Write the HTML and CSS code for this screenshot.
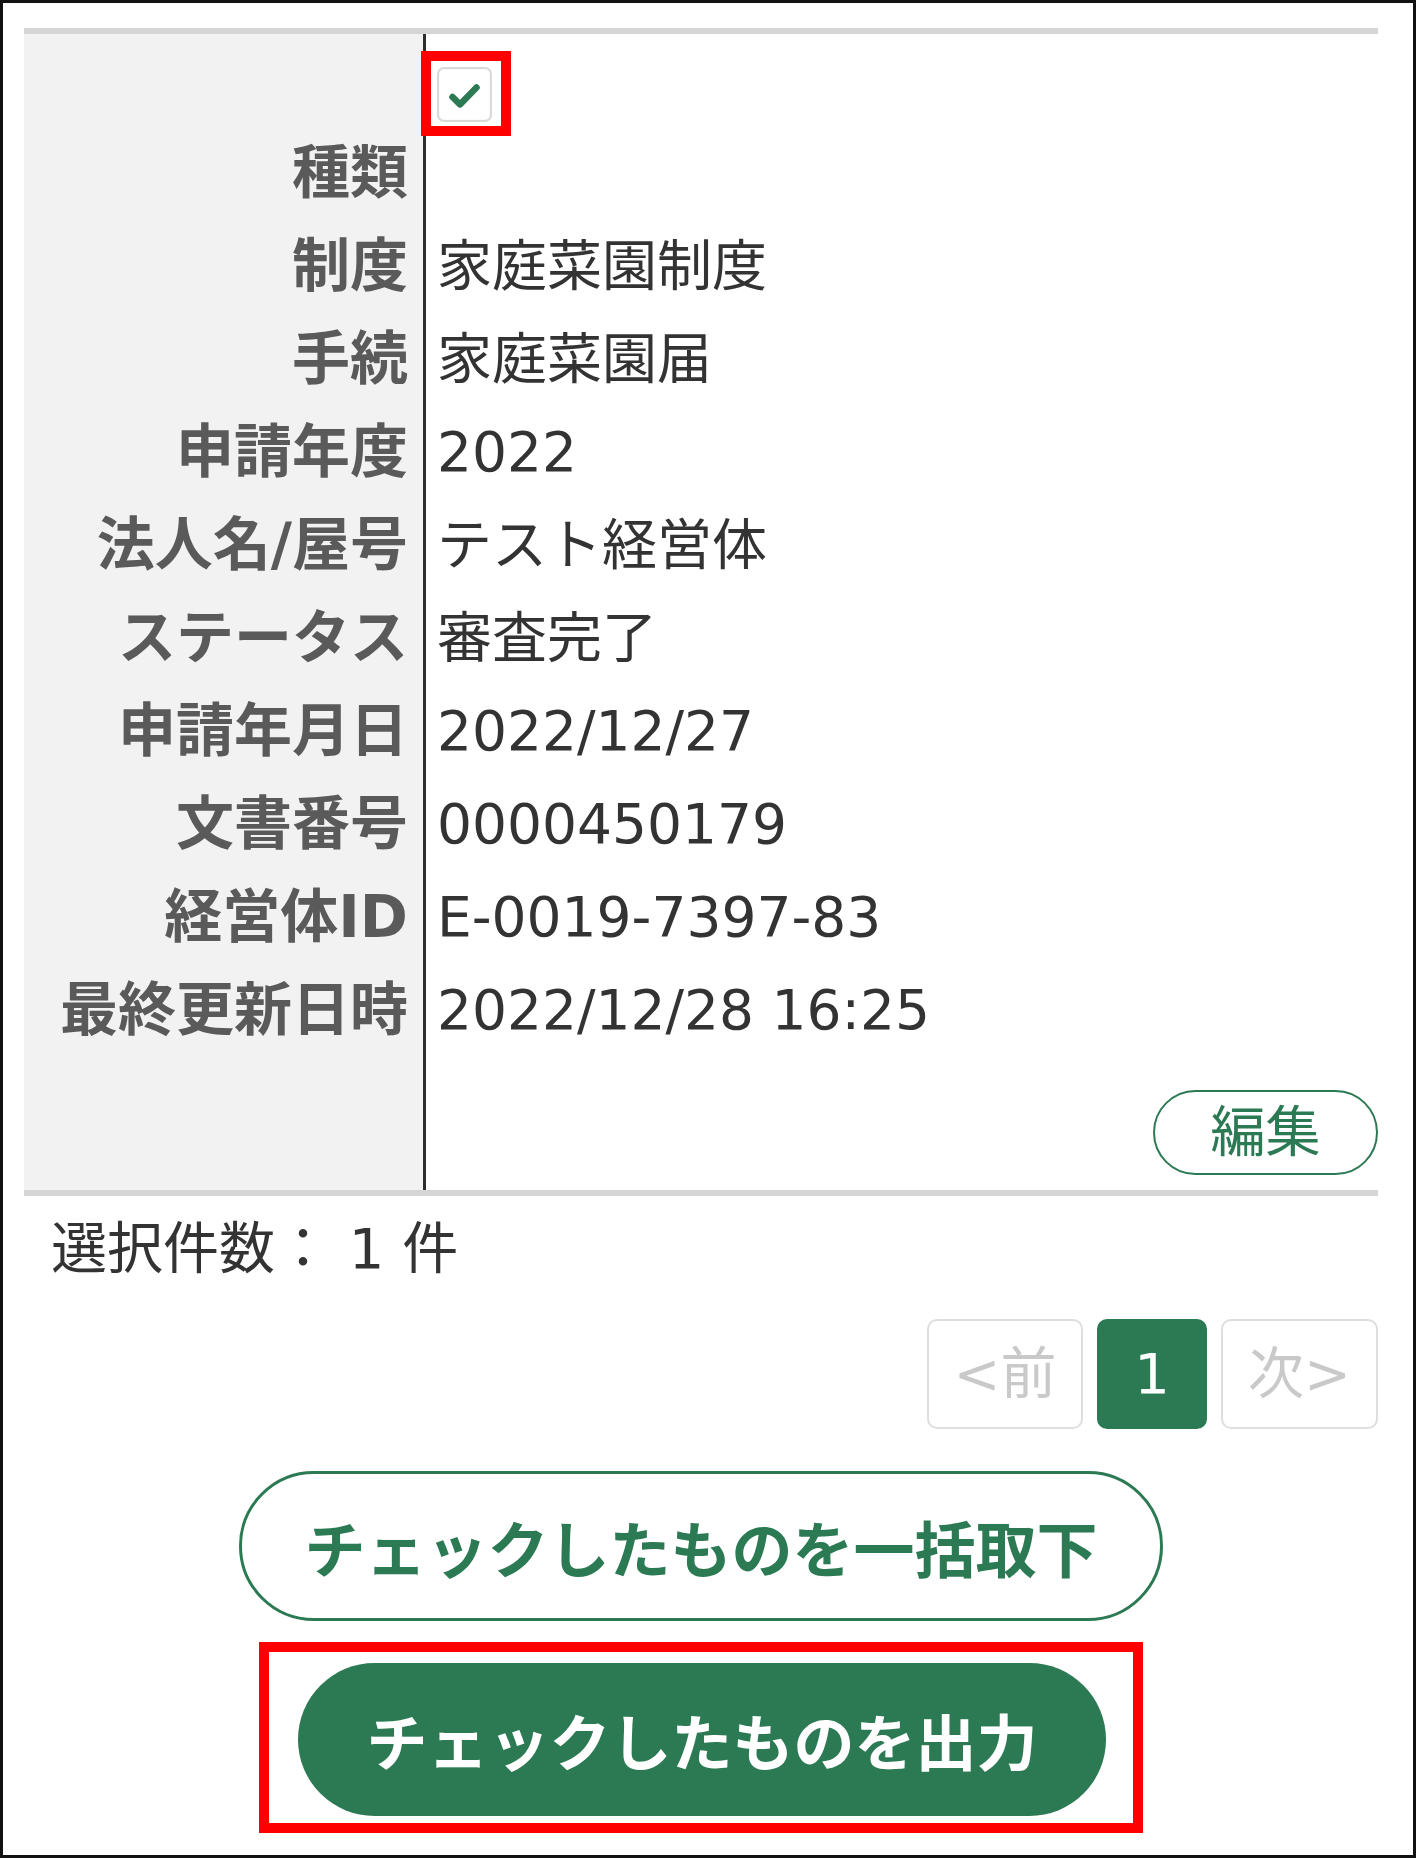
FILE: index.html
```html
<!DOCTYPE html>
<html lang="ja">
<head>
<meta charset="utf-8">
<title>申請一覧</title>
<link rel="stylesheet" href="styles.css">
</head>
<body>
<div class="frame">
  <div class="record">
    <div class="lbl"></div>
    <div class="val val-check">
      <span class="cb-wrap">
        <span class="checkbox">
          <svg viewBox="0 0 51 51" width="51" height="51" aria-hidden="true"><path d="M13.5 28 L21 35.5 L37.5 18.5" fill="none" stroke="#2b7a53" stroke-width="6.5" stroke-linecap="round" stroke-linejoin="round"/></svg>
        </span>
        <span class="annot-mark"></span>
      </span>
    </div>

    <div class="lbl">種類</div><div class="val"></div>
    <div class="lbl">制度</div><div class="val">家庭菜園制度</div>
    <div class="lbl">手続</div><div class="val">家庭菜園届</div>
    <div class="lbl">申請年度</div><div class="val">2022</div>
    <div class="lbl">法人名/屋号</div><div class="val">テスト経営体</div>
    <div class="lbl">ステータス</div><div class="val">審査完了</div>
    <div class="lbl">申請年月日</div><div class="val">2022/12/27</div>
    <div class="lbl">文書番号</div><div class="val">0000450179</div>
    <div class="lbl">経営体ID</div><div class="val">E-0019-7397-83</div>
    <div class="lbl">最終更新日時</div><div class="val">2022/12/28 16:25</div>

    <div class="lbl"></div>
    <div class="val val-actions"><button class="btn-edit" type="button">編集</button></div>
  </div>

  <div class="count">選択件数： 1 件</div>

  <div class="pager">
    <span class="pg pg-prev">&lt;前</span>
    <span class="pg pg-cur">1</span>
    <span class="pg pg-next">次&gt;</span>
  </div>

  <div class="bulk">
    <button class="btn-outline" type="button">チェックしたものを一括取下</button>
    <div class="annot-box">
      <button class="btn-solid" type="button">チェックしたものを出力</button>
    </div>
  </div>
</div>
</body>
</html>
```

FILE: styles.css
```css
* { box-sizing: border-box; }

html, body {
  margin: 0;
  padding: 0;
  background: #fff;
}

body {
  font-family: "DejaVu Sans", "Noto Sans CJK JP", sans-serif;
  color: #333;
}

.frame {
  width: 1416px;
  height: 1858px;
  border: 3px solid #111;
  padding: 25px 35px 0 21px;
}

/* record table */
.record {
  display: grid;
  grid-template-columns: 402px 1fr;
  border-top: 6px solid #d5d5d5;
  border-bottom: 6px solid #d5d5d5;
}

.lbl {
  background: #f2f2f2;
  border-right: 3px solid #2e2e2e;
  text-align: right;
  padding-right: 15px;
  font-weight: bold;
  color: #5a5a5a;
  font-size: 58px;
  line-height: 93px;
  white-space: nowrap;
  min-height: 93px;
}

.val {
  padding-left: 11px;
  font-size: 55px;
  line-height: 93px;
  height: 93px;
  color: #333;
  white-space: nowrap;
}

.val-check {
  height: 90px;
  padding-top: 33px;
  line-height: 0;
}

.cb-wrap {
  position: relative;
  display: inline-block;
  width: 55px;
  height: 55px;
}

.checkbox {
  display: flex;
  align-items: center;
  justify-content: center;
  width: 55px;
  height: 55px;
  border: 2px solid #d9d9d9;
  border-radius: 7px;
  background: #fff;
  box-shadow: inset 0 0 2px rgba(0,0,0,0.08);
}

.annot-mark {
  position: absolute;
  left: -16px;
  top: -16px;
  width: 90px;
  height: 85px;
  border: 10px solid #ff0000;
}

.val-actions {
  height: 133px;
  padding-top: 33px;
  display: flex;
  justify-content: flex-end;
  align-items: flex-start;
  line-height: 1;
}

.btn-edit {
  width: 225px;
  height: 85px;
  border: 2px solid #2b7a53;
  border-radius: 43px;
  background: #fff;
  color: #2b7a53;
  font-family: "DejaVu Sans", "Noto Sans CJK JP", sans-serif;
  font-size: 55px;
  line-height: 1;
  padding: 0;
  display: flex;
  align-items: center;
  justify-content: center;
}

/* selection count */
.count {
  margin-top: 13px;
  padding-left: 27px;
  font-size: 56px;
  line-height: 80px;
  height: 80px;
  color: #333;
}

/* pager */
.pager {
  margin-top: 30px;
  display: flex;
  justify-content: flex-end;
  gap: 14px;
}

.pg {
  height: 110px;
  border: 2px solid #dedede;
  border-radius: 10px;
  display: flex;
  align-items: center;
  justify-content: center;
  font-size: 56px;
  line-height: 1;
  color: #c9c9c9;
  background: #fff;
}

.pg-prev { width: 156px; }
.pg-next { width: 157px; }
.pg-cur {
  width: 110px;
  background: #2b7a53;
  border-color: #2b7a53;
  color: #fff;
}

/* bulk buttons */
.bulk {
  margin-top: 42px;
  display: flex;
  flex-direction: column;
  align-items: center;
}

.btn-outline,
.btn-solid {
  font-family: "Noto Sans CJK JP", sans-serif;
  font-weight: bold;
  font-size: 61px;
  line-height: 1;
  display: flex;
  align-items: center;
  justify-content: center;
}

.btn-outline {
  height: 150px;
  padding: 0 62px;
  border: 3px solid #2b7a53;
  border-radius: 75px;
  background: #fff;
  color: #2b7a53;
}

.annot-box {
  margin-top: 21px;
  border: 10px solid #ff0000;
  padding: 11px 27px 7px 29px;
}

.btn-solid {
  height: 153px;
  padding: 0 68px;
  border: none;
  border-radius: 77px;
  background: #2b7a53;
  color: #fff;
}
```
